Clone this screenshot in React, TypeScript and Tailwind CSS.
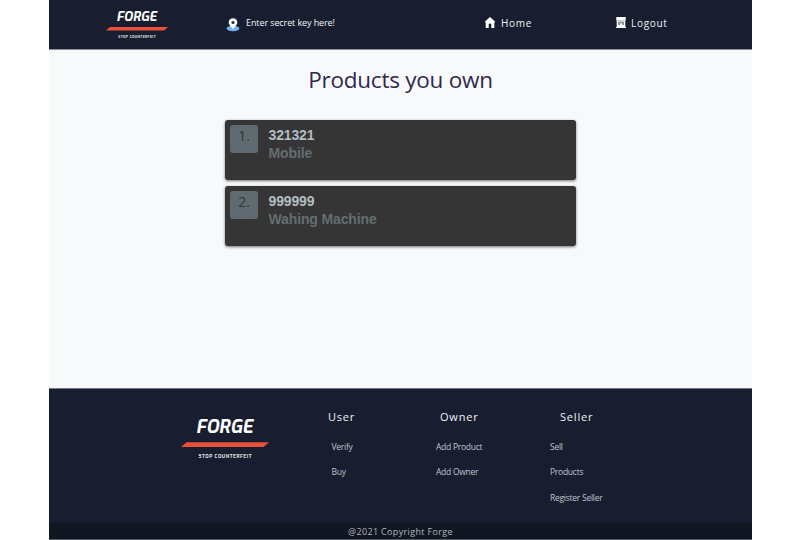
import React from "react";

function Logo({ className }: { className: string }) {
  return (
    <svg viewBox="0 0 88 44" className={className} overflow="visible" fontFamily="Exo, 'Noto Sans', 'Open Sans', sans-serif">
      <text x="15" y="15" fontSize="17.500" fontWeight="700" fontStyle="italic" fill="#fff" textLength="57" lengthAdjust="spacingAndGlyphs">FORGE</text>
      <path d="M5.500 24.200H88L82.500 29H0z" fill="#e8503a" />
      <text x="17.500" y="40" fontSize="4.800" fontWeight="700" fill="#e4e6ea" textLength="53" lengthAdjust="spacing">STOP COUNTERFEIT</text>
    </svg>
  );
}

function PinIcon() {
  return (
    <svg viewBox="0 0 14 14" className="h-[14px] w-[14px]">
      <ellipse cx="7" cy="10.500" rx="6.300" ry="2.700" fill="#72b4f2" />
      <path d="M7 .2C4.300.2 2.700 2.100 2.700 4.500 2.700 7.100 5.600 8.700 7 11.400 8.400 8.700 11.300 7.100 11.300 4.500 11.300 2.100 9.700.2 7 .2Z" fill="#fff" />
      <circle cx="7" cy="4.500" r="1.600" fill="#253047" />
    </svg>
  );
}

function HomeIcon() {
  return (
    <svg viewBox="0 0 10 10" className="h-[11px] w-[10px]" preserveAspectRatio="none" fill="#fff">
      <path d="M5 0 0 4.200V5H.7V10H3.700V6.700Q3.700 5.900 5 5.900T6.300 6.700V10H9.300V5H10V4.200Z" />
    </svg>
  );
}

function GateIcon() {
  return (
    <svg viewBox="0 0 10 11" className="h-[11px] w-[10px]">
      <path d="M.3 0H9.700V3.600H9.300V10H10V11H0V10H.7V3.600H.3Z" fill="#fff" />
      <path d="M.7 3.500H9.300" stroke="#9ea5b3" strokeWidth=".5" />
      <path d="M3 4.500V8M5 4.500V6.500M7 4.500V8" stroke="#253047" strokeWidth="1" />
    </svg>
  );
}

const products = [
  { id: "321321", name: "Mobile" },
  { id: "999999", name: "Wahing Machine" },
];

export default function App() {
  return (
    <div className="h-[540px] w-[800px] overflow-hidden bg-white pl-[49px] font-['Open_Sans',sans-serif]">
      <div className="flex h-full w-[703px] flex-col bg-[#f8f9fb]">
        <header className="flex h-[50px] shrink-0 items-start border-b border-[#8b8f99] bg-[#181e2f] text-[#f2f3f5]">
          <Logo className="mt-[10px] ml-[57px] h-[31px] w-[62px]" />
          <div className="mt-[18px] ml-[58px] flex h-[14px]">
            <PinIcon />
            <span className="ml-[6px] w-[90px] text-[9px] leading-[9px] tracking-[-0.1px] whitespace-nowrap">Enter secret key here!</span>
          </div>
          <nav className="mt-[17px] ml-[149px] flex text-[10px] leading-[12px] tracking-[0.7px]">
            <div className="flex w-[131px] gap-[6px]">
              <HomeIcon />
              <span>Home</span>
            </div>
            <div className="flex gap-[5px]">
              <GateIcon />
              <span>Logout</span>
            </div>
          </nav>
        </header>

        <main className="flex h-[338px] shrink-0 flex-col items-center">
          <h1 className="mt-[15px] h-[54.500px] text-[22.500px] leading-[29px] tracking-[-0.250px] whitespace-nowrap text-[#2e294e]">Products you own</h1>
          <ol className="flex w-[351px] flex-col gap-[5.500px]">
            {products.map((product, index) => (
              <li key={product.id} className="flex h-[60.500px] rounded-[3px] bg-[#353535] shadow-[0_1px_3px_rgba(0,0,0,0.55)]">
                <span className="mt-[5px] ml-[5px] h-[28px] w-[28px] rounded-[3px] bg-[#5f6b70] text-center text-[14px] leading-[21px] text-[#303638]">{index + 1}.</span>
                <div className="mt-[6px] ml-[10.500px] font-['Liberation_Sans',sans-serif] text-[14px] leading-[18.500px] font-bold tracking-[-0.130px]">
                  <div className="text-[#b2bec3]">{product.id}</div>
                  <div className="text-[#636e72]">{product.name}</div>
                </div>
              </li>
            ))}
          </ol>
        </main>

        <footer className="flex h-[152px] shrink-0 flex-col border-t border-[#737985] bg-[#181e2f]">
          <div className="flex h-[134px] shrink-0 text-[8.500px] leading-[25.500px] tracking-[-0.260px] whitespace-nowrap text-[#c0c3ca]">
            <Logo className="mt-[29px] ml-[132px] h-[44px] w-[88px] tracking-normal" />
            <div className="ml-[59px] w-[107px] pt-[19px]">
              <h2 className="mb-[8.500px] text-[11px] leading-[17px] tracking-[0.800px] text-[#f1f2f4]">User</h2>
              <ul className="pl-[3.500px]"><li>Verify</li><li>Buy</li></ul>
            </div>
            <div className="w-[114px] pt-[19px]">
              <h2 className="mb-[8.500px] pl-[5px] text-[11px] leading-[17px] tracking-[0.800px] text-[#f1f2f4]">Owner</h2>
              <ul className="pl-[1px]"><li>Add Product</li><li>Add Owner</li></ul>
            </div>
            <div className="pt-[19px]">
              <h2 className="mb-[8.500px] pl-[11px] text-[11px] leading-[17px] tracking-[0.800px] text-[#f1f2f4]">Seller</h2>
              <ul className="pl-[1px]"><li>Sell</li><li>Products</li><li>Register Seller</li></ul>
            </div>
          </div>
          <div className="h-[17px] border-b border-[#555b67] bg-[#111722] text-center text-[9px] leading-[17px] tracking-[0.350px] text-[#b1b4b9]">@2021 Copyright Forge</div>
        </footer>
      </div>
    </div>
  );
}
